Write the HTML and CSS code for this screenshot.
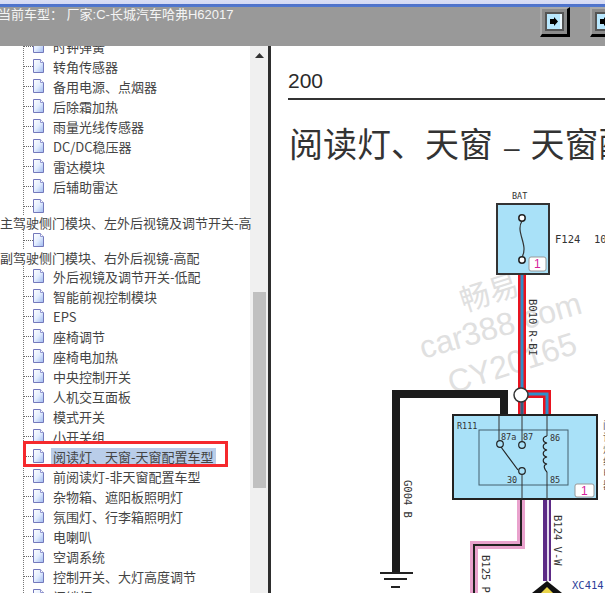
FILE: index.html
```html
<!DOCTYPE html>
<html lang="zh-CN">
<head>
<meta charset="utf-8">
<title>当前车型</title>
<link rel="stylesheet" href="styles.css">
</head>
<body>
<svg class="defs" width="0" height="0" aria-hidden="true">
  <defs>
    <linearGradient id="pg" x1="0" y1="0" x2="1" y2="1">
      <stop offset="0" stop-color="#ffffff"/>
      <stop offset="0.5" stop-color="#e2edff"/>
      <stop offset="1" stop-color="#9db8ee"/>
    </linearGradient>
    <symbol id="doc" viewBox="0 0 13 16">
      <path d="M1.5 1.5H8.5L11.5 4.5V14.5H1.5Z" fill="url(#pg)" stroke="#7378bb" stroke-width="1"/>
      <path d="M8.500 1.500V4.500H11.500" fill="#fff" stroke="#9297d0" stroke-width="1"/>
    </symbol>
  </defs>
</svg>
<div class="app">
  <div class="titlebar"></div>
  <header class="toolbar">
    <span class="model">当前车型： 厂家:C-长城汽车哈弗H62017</span>
    <div class="tools">
      <button class="tool"><span class="tool-face"><svg width="14" height="15" viewBox="0 0 14 15"><path d="M2 5H6V3L10 7.500L6 12V10H2Z" fill="#000"/><path d="M13 0V15" stroke="#fff" stroke-width="1.500"/></svg></span></button>
      <button class="tool"><span class="tool-face"><svg width="14" height="15" viewBox="0 0 14 15"><path d="M2 5H6V3L10 7.500L6 12V10H2Z" fill="#000"/></svg></span></button>
    </div>
  </header>
  <main class="panes">
    <nav class="sidebar">
      <ul class="tree">
        <li class="row first"><svg class="doc"><use href="#doc"/></svg><span class="label">时钟弹簧</span></li>
        <li class="row"><svg class="doc"><use href="#doc"/></svg><span class="label">转角传感器</span></li>
        <li class="row"><svg class="doc"><use href="#doc"/></svg><span class="label">备用电源、点烟器</span></li>
        <li class="row"><svg class="doc"><use href="#doc"/></svg><span class="label">后除霜加热</span></li>
        <li class="row"><svg class="doc"><use href="#doc"/></svg><span class="label">雨量光线传感器</span></li>
        <li class="row"><svg class="doc"><use href="#doc"/></svg><span class="label">DC/DC稳压器</span></li>
        <li class="row"><svg class="doc"><use href="#doc"/></svg><span class="label">雷达模块</span></li>
        <li class="row"><svg class="doc"><use href="#doc"/></svg><span class="label">后辅助雷达</span></li>
        <li class="row"><svg class="doc"><use href="#doc"/></svg></li>
        <li class="wrap">主驾驶侧门模块、左外后视镜及调节开关-高</li>
        <li class="row"><svg class="doc"><use href="#doc"/></svg></li>
        <li class="wrap second">副驾驶侧门模块、右外后视镜-高配</li>
        <li class="row"><svg class="doc"><use href="#doc"/></svg><span class="label">外后视镜及调节开关-低配</span></li>
        <li class="row"><svg class="doc"><use href="#doc"/></svg><span class="label">智能前视控制模块</span></li>
        <li class="row"><svg class="doc"><use href="#doc"/></svg><span class="label">EPS</span></li>
        <li class="row"><svg class="doc"><use href="#doc"/></svg><span class="label">座椅调节</span></li>
        <li class="row"><svg class="doc"><use href="#doc"/></svg><span class="label">座椅电加热</span></li>
        <li class="row"><svg class="doc"><use href="#doc"/></svg><span class="label">中央控制开关</span></li>
        <li class="row"><svg class="doc"><use href="#doc"/></svg><span class="label">人机交互面板</span></li>
        <li class="row"><svg class="doc"><use href="#doc"/></svg><span class="label">模式开关</span></li>
        <li class="row"><svg class="doc"><use href="#doc"/></svg><span class="label">小开关组</span></li>
        <li class="row selected"><svg class="doc"><use href="#doc"/></svg><span class="label">阅读灯、天窗-天窗配置车型</span></li>
        <li class="row"><svg class="doc"><use href="#doc"/></svg><span class="label">前阅读灯-非天窗配置车型</span></li>
        <li class="row"><svg class="doc"><use href="#doc"/></svg><span class="label">杂物箱、遮阳板照明灯</span></li>
        <li class="row"><svg class="doc"><use href="#doc"/></svg><span class="label">氛围灯、行李箱照明灯</span></li>
        <li class="row"><svg class="doc"><use href="#doc"/></svg><span class="label">电喇叭</span></li>
        <li class="row"><svg class="doc"><use href="#doc"/></svg><span class="label">空调系统</span></li>
        <li class="row"><svg class="doc"><use href="#doc"/></svg><span class="label">控制开关、大灯高度调节</span></li>
        <li class="row"><svg class="doc"><use href="#doc"/></svg><span class="label">门锁灯</span></li>
      </ul>
      <div class="scrollbar">
        <svg class="arrow" width="9" height="5" viewBox="0 0 9 5"><path d="M0 5L4.500 0L9 5Z" fill="#333"/></svg>
        <div class="thumb"></div>
      </div>
    </nav>
    <section class="doc-page">
      <h2 class="page-no">200</h2>
      <h1 class="page-title">阅读灯、天窗<span class="dash">–</span>天窗配置车型</h1>
      <svg class="diagram" width="335" height="423" viewBox="270 170 335 423">
        <g class="wm">
          <text x="464" y="312" transform="rotate(-18 464 312)" class="wm-cn">畅易</text>
          <text x="423" y="359" transform="rotate(-16 423 359)" class="wm-en">car388.com</text>
          <text x="452" y="394" transform="rotate(-18 452 394)" class="wm-en">CY20165</text>
        </g>
        <!-- BAT fuse -->
        <text x="512" y="199" class="t">BAT</text>
        <rect x="497" y="204" width="52" height="70" fill="#a9e1f8" stroke="#333" stroke-width="2"/>
        <path d="M522 221C515 232 529 245 522 257" fill="none" stroke="#333" stroke-width="1.200"/>
        <circle cx="522" cy="218" r="3.200" fill="#fff" stroke="#222" stroke-width="1.500"/>
        <circle cx="522" cy="260" r="3.200" fill="#fff" stroke="#222" stroke-width="1.500"/>
        <rect x="529" y="257" width="17" height="14" rx="2" fill="#fff" stroke="#999"/>
        <text x="534" y="268" class="badge">1</text>
        <text x="555" y="243" class="t big">F124</text>
        <text x="594" y="243" class="t big">10</text>
        <!-- top wire -->
        <path d="M522 275V390" stroke="#e8131f" stroke-width="8" fill="none"/>
        <path d="M522 275V390" stroke="#2f8fc9" stroke-width="3" fill="none"/>
        <text transform="translate(529 299) rotate(90)" class="t big">B010 R-BI</text>
        <!-- black ground wire -->
        <path d="M396 572V394H504V415" fill="none" stroke="#1c1c1c" stroke-width="8"/>
        <path d="M380 573H413" stroke="#222" stroke-width="2"/>
        <path d="M384 579H407" stroke="#222" stroke-width="2"/>
        <path d="M391 587H400" stroke="#222" stroke-width="2"/>
        <text transform="translate(404 480) rotate(90)" class="t big">G004 B</text>
        <!-- red branch -->
        <path d="M522 394V415M522 394H547V415" fill="none" stroke="#e8131f" stroke-width="8"/>
        <path d="M522 394V415M522 394H547V415" fill="none" stroke="#2f8fc9" stroke-width="3"/>
        <circle cx="521" cy="395" r="7" fill="#fff" stroke="#333" stroke-width="1.500"/>
        <!-- relay -->
        <rect x="453" y="415" width="144" height="84" fill="#a9e1f8" stroke="#222" stroke-width="2"/>
        <rect x="479" y="430" width="89" height="55" fill="none" stroke="#44606e" stroke-width="1"/>
        <text x="457" y="429" class="t">R111</text>
        <path d="M499 416V440M522 402V441M547 416V436M547 472V499M522 475V499" fill="none" stroke="#333" stroke-width="1"/>
        <path d="M547 436c-5 1-5 6 0 7c-5 1-5 6 0 7c-5 1-5 6 0 7c-5 1-5 6 0 7c-5 1-2 6 0 8" fill="none" stroke="#222" stroke-width="1.200"/>
        <path d="M501 447L518 470" stroke="#222" stroke-width="1.200"/>
        <circle cx="500" cy="444" r="3.300" fill="#a9e1f8" stroke="#222" stroke-width="1.200"/>
        <circle cx="522" cy="445" r="3.300" fill="#a9e1f8" stroke="#222" stroke-width="1.200"/>
        <circle cx="522" cy="471" r="3.300" fill="#a9e1f8" stroke="#222" stroke-width="1.200"/>
        <text x="501" y="440" class="t">87a</text>
        <text x="523" y="440" class="t">87</text>
        <text x="550" y="441" class="t">86</text>
        <text x="507" y="483" class="t">30</text>
        <text x="550" y="483" class="t">85</text>
        <rect x="575" y="484" width="19" height="13" rx="2" fill="#fff" stroke="#999"/>
        <text x="581" y="495" class="badge">1</text>
        <!-- lower wires -->
        <path d="M521 500V545H474V593" fill="none" stroke="#e9a2cd" stroke-width="8"/>
        <path d="M521 500V545H474V593" fill="none" stroke="#222" stroke-width="2"/>
        <path d="M547 500V581" stroke="#5d2a86" stroke-width="8"/>
        <path d="M548 500V581" stroke="#e4d8ee" stroke-width="2"/>
        <path d="M547 581L562 593H532Z" fill="#111"/>
        <path d="M547 587L553 593H541Z" fill="#e9d44a"/>
        <text transform="translate(554 515) rotate(90)" class="t big">B124 V-W</text>
        <text transform="translate(482 555) rotate(90)" class="t big">B125 P</text>
        <text x="572" y="589" class="xc">XC414</text>
        <text x="608" y="420" class="side">阅读灯组电器</text>
      </svg>
    </section>
  </main>
</div>
</body>
</html>
```

FILE: styles.css
```css
*, *::before, *::after { box-sizing: border-box; }
html, body { margin: 0; padding: 0; height: 100%; overflow: hidden; background: #fff; }
body { font-family: "Liberation Sans", "Noto Sans CJK SC", sans-serif; }
.defs { position: absolute; }
.app { width: 605px; height: 593px; display: flex; flex-direction: column; overflow: hidden; }
.titlebar { height: 7px; flex: none; background: linear-gradient(#d9def5 0, #d3d9f4 57%, #4f70c8 57%, #4f78d0 100%); }
.toolbar { height: 39px; flex: none; background: #999; display: flex; justify-content: space-between; align-items: flex-start; }
.model { color: #f4f4f4; font-size: 13px; line-height: 15px; margin-left: -2px; white-space: pre; }
.tools { display: flex; gap: 20px; margin-right: -15px; }
.tool { width: 30px; height: 30px; padding: 3px; background: #8c8c8c; border-style: solid; border-width: 2px 3px 3px 2px; border-color: #aaa #000 #000 #aaa; display: flex; }
.tool-face { flex: 1; background: #b9e8ff; border: 2px solid #555; display: flex; align-items: center; justify-content: center; }
.panes { flex: 1; min-height: 0; display: flex; }
.sidebar { width: 271px; flex: none; display: flex; overflow: hidden; border-right: 3px solid #2e2e2e; position: relative; }
.tree { list-style: none; margin: -10px 0 0; padding: 0 0 0 23px; width: 250px; flex: none; font-size: 13px; color: #444; font-family: "Noto Sans CJK SC", "Liberation Sans", sans-serif; background-image: linear-gradient(#777 50%, transparent 50%); background-size: 1px 2px; background-repeat: repeat-y; background-position: 23px 0; }
.row { height: 20px; display: flex; align-items: center; padding-left: 9px; white-space: nowrap; position: relative; }
.row::before { content: ""; position: absolute; left: 0; top: 10px; width: 10px; border-top: 1px dotted #666; }
.doc { width: 13px; height: 16px; flex: none; }
.label { margin-left: 6px; padding: 0 2px; line-height: 17px; }
.wrap { margin-left: -23px; height: 14px; line-height: 14px; white-space: nowrap; background: #fff; position: relative; }
.wrap.second { height: 16px; line-height: 16px; }
.selected::after { content: ""; position: absolute; left: 0; top: -5px; width: 205px; height: 26px; border: 3px solid #f5292d; }
.selected .label { background: #b9cde9; }
.scrollbar { width: 18px; flex: none; background: #f0f0f0; display: flex; flex-direction: column; align-items: center; padding-top: 7px; }
.arrow { flex: none; }
.thumb { width: 13px; height: 196px; margin-top: 234px; background: #c0c0c0; flex: none; }
.doc-page { flex: 1; min-width: 0; position: relative; padding: 23px 0 0 17px; overflow: hidden; }
.page-no { margin: 0; height: 31px; font-size: 21px; line-height: 24px; font-weight: 400; color: #2a2a2a; border-bottom: 2px solid #333; }
.page-title { margin: 23px 0 0 1px; font-size: 34px; line-height: 40px; font-weight: 400; color: #333; white-space: nowrap; font-family: "Noto Sans CJK SC", sans-serif; }
.dash { padding: 0 11px; font-size: 28px; font-family: "Liberation Sans", sans-serif; }
.diagram { position: absolute; left: -1px; top: 124px; display: block; }
.t { font-family: "DejaVu Sans Mono", "Liberation Mono", monospace; font-size: 8.500px; fill: #333; }
.t.big { font-size: 10.500px; }
.badge { font-family: "Liberation Sans", sans-serif; font-size: 12px; fill: #d6219c; }
.xc { font-family: "DejaVu Sans Mono", monospace; font-size: 10.500px; fill: #2d3f9a; }
.wm { fill: #e0e0e0; }
.wm-cn { font-family: "Noto Sans CJK SC", sans-serif; font-size: 30px; }
.wm-en { font-family: "Liberation Sans", sans-serif; font-size: 32px; }
.side { font-family: "Noto Sans CJK SC", sans-serif; font-size: 10px; fill: #555; writing-mode: vertical-rl; letter-spacing: 2px; }
```
